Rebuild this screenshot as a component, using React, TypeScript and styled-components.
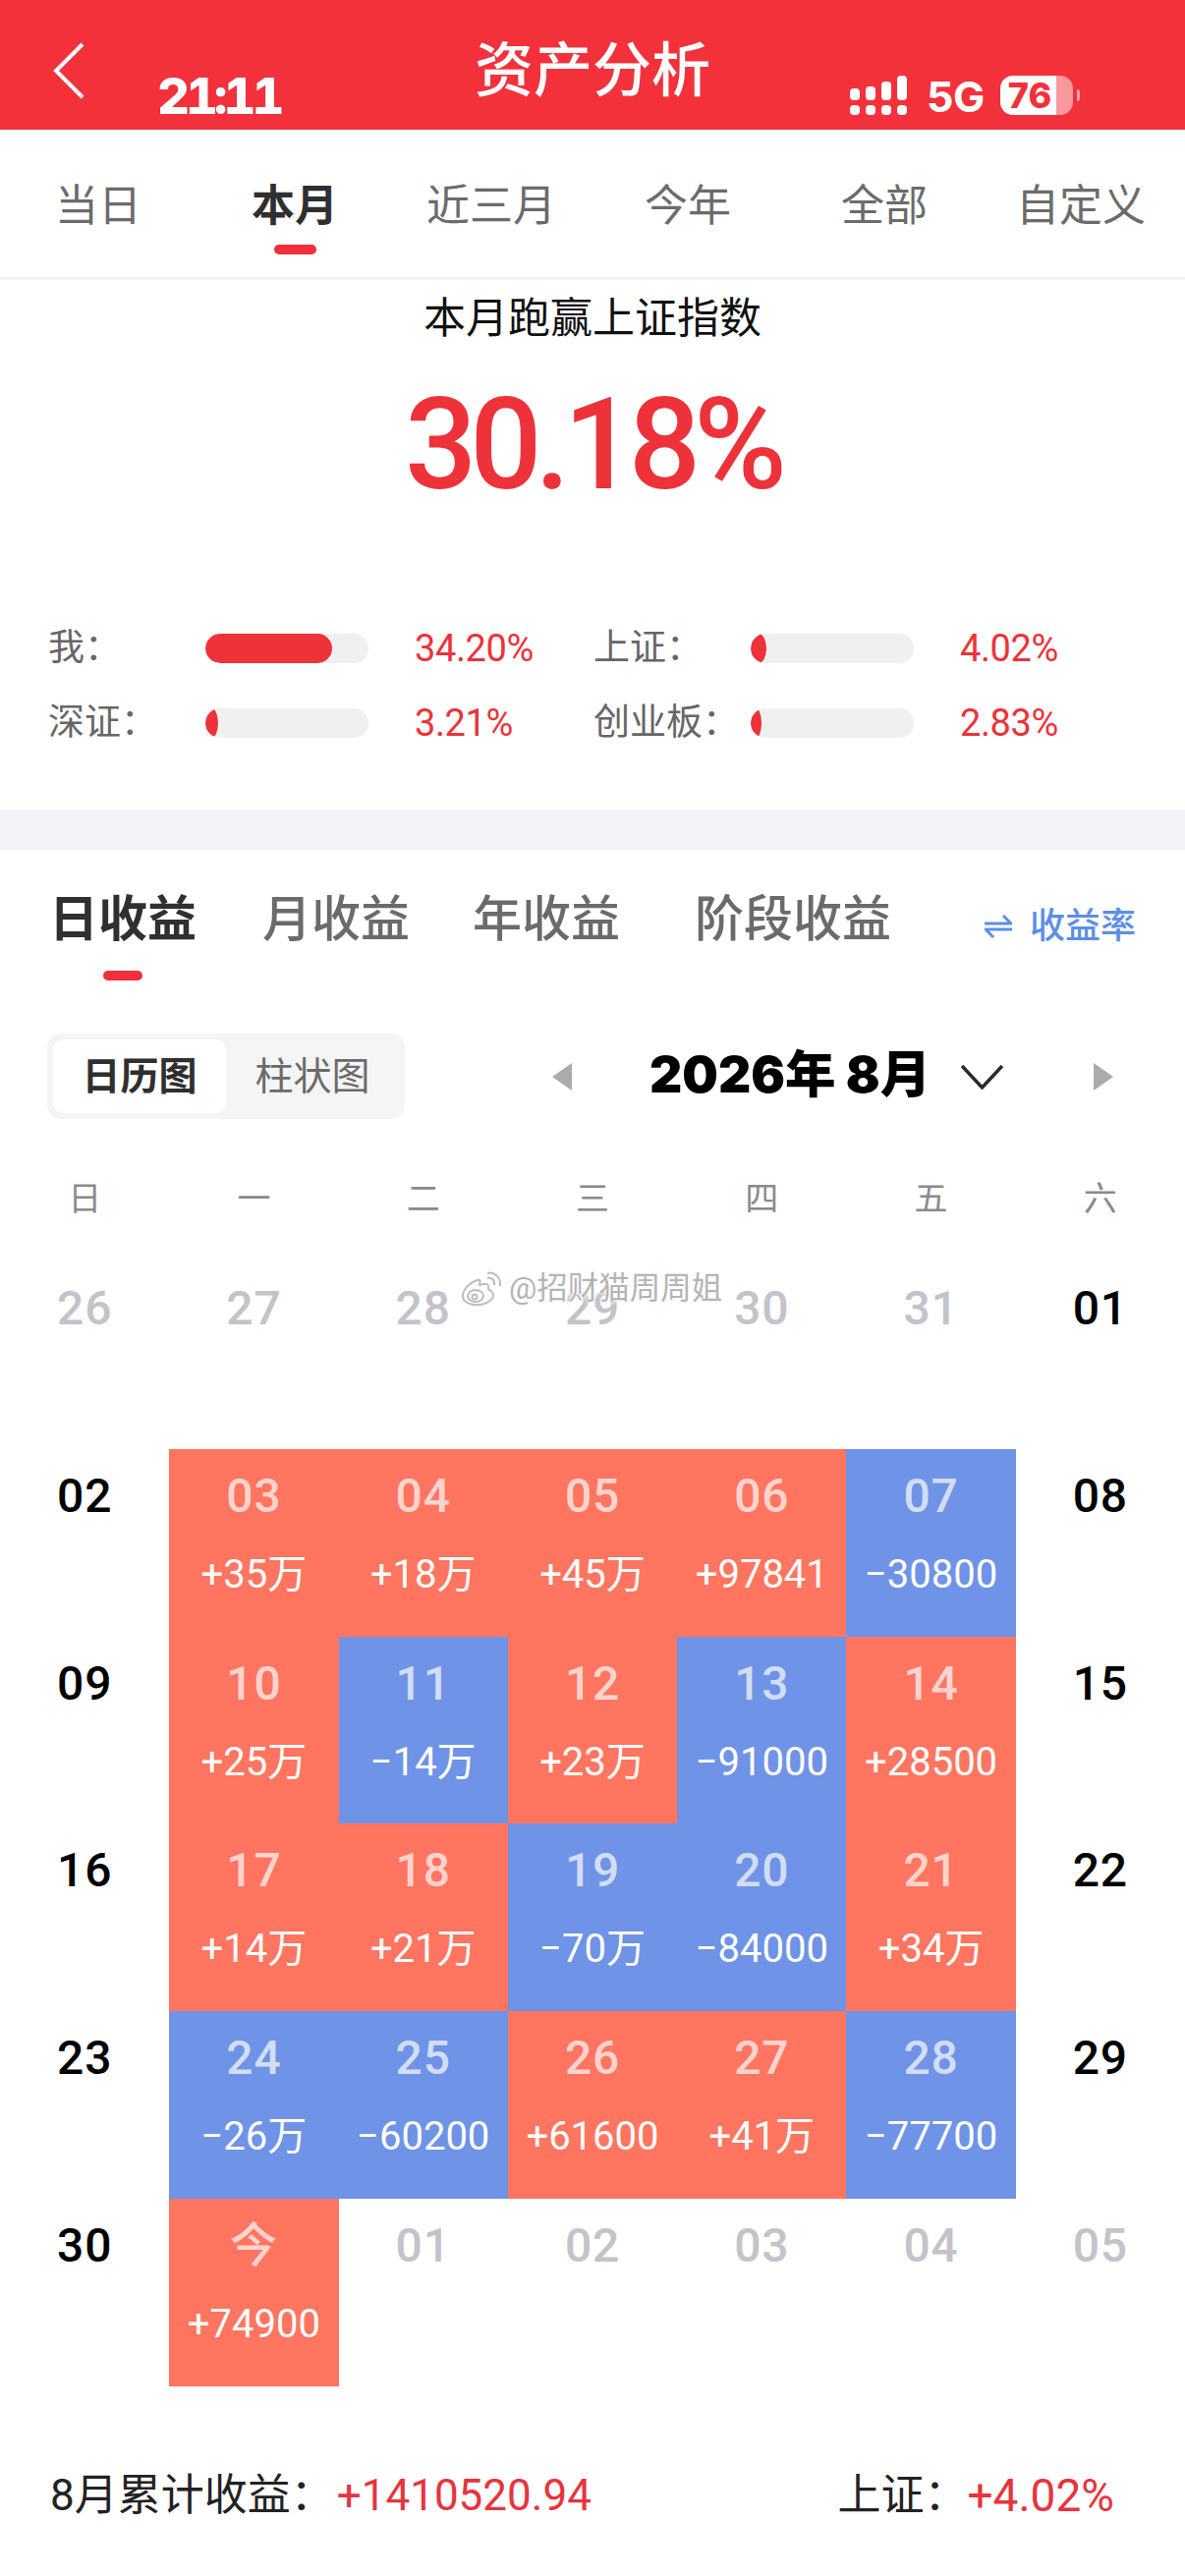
import React from 'react';
import styled, { createGlobalStyle } from 'styled-components';

const FONT = '"Roboto", "Noto Sans CJK SC", sans-serif';
const RED = '#f3313b';
const UP = '#ff7560';
const DOWN = '#6f93e6';

const GlobalStyle = createGlobalStyle`
  html, body {
    margin: 0;
    padding: 0;
    background: #fff;
  }
  body {
    font-family: ${FONT};
  }
  * {
    box-sizing: border-box;
  }
`;

const Page = styled.div`
  position: relative;
  width: 1206px;
  height: 2622px;
  overflow: hidden;
  background: #fff;
`;

const Header = styled.header`
  display: grid;
  grid-template-columns: 160px 323px 238px 144px auto;
  height: 132px;
  background: ${RED};
  color: #fff;
`;

const BackButton = styled.svg`
  margin: 43px 0 0 53px;
  width: 34px;
  height: 58px;
`;

const Clock = styled.div`
  margin-top: 70px;
  font: 800 51px/56px "Inter", sans-serif;
  font-variant-numeric: tabular-nums;
  letter-spacing: -4px;
`;

const Title = styled.h1`
  margin: 40px 0 0;
  font: 500 60px/66px ${FONT};
  white-space: nowrap;
`;

const StatusIcons = styled.div`
  grid-column: 5;
  display: flex;
  align-items: flex-start;
  margin-top: 77px;
`;

const Signal = styled.div`
  display: flex;
  gap: 6px;
  height: 40px;
`;

const SignalColumn = styled.div`
  display: flex;
  flex-direction: column;
  justify-content: flex-end;
  gap: 5px;
  width: 10px;
`;

const SignalBar = styled.span<{ $h: number }>`
  display: block;
  height: ${p => p.$h}px;
  border-radius: 4px;
  background: #fff;
`;

const Network = styled.div`
  margin: 1px 0 0 20px;
  width: 75px;
  font: 700 43px/40px "Inter", sans-serif;
  letter-spacing: -0.5px;
`;

const Battery = styled.div`
  display: flex;
  align-items: center;
  justify-content: center;
  width: 74px;
  height: 40px;
  padding-right: 14px;
  border-radius: 13px;
  background: linear-gradient(90deg, #fff 77%, rgba(255, 255, 255, 0.5) 77%);
  color: ${RED};
  font: 800 36px/40px "Inter", sans-serif;
`;

const BatteryNub = styled.span`
  width: 3px;
  height: 12px;
  margin: 14px 0 0 4px;
  border-radius: 0 3px 3px 0;
  background: rgba(255, 255, 255, 0.55);
`;

const PeriodTabs = styled.nav`
  display: grid;
  grid-template-columns: repeat(6, 200px);
  height: 153px;
  padding-top: 52px;
  border-bottom: 3px solid #f3f3f3;
`;

const TabColumn = styled.div`
  display: flex;
  flex-direction: column;
  align-items: center;
`;

const PeriodLabel = styled.span<{ $active?: boolean }>`
  font: ${p => (p.$active ? 700 : 400)} 44px/52px ${FONT};
  color: ${p => (p.$active ? '#2f2f2f' : '#6b6b6b')};
`;

const Underline = styled.span<{ $active?: boolean; $w: number; $gap: number }>`
  width: ${p => p.$w}px;
  height: 10px;
  margin-top: ${p => p.$gap}px;
  border-radius: 5px;
  background: ${p => (p.$active ? '#f02f3a' : 'transparent')};
`;

const Summary = styled.section`
  height: 539px;
  padding-top: 11px;
`;

const Caption = styled.div`
  font: 400 43px/56px ${FONT};
  color: #111;
  text-align: center;
`;

const BigNumber = styled.div`
  margin-top: 36px;
  font: 500 129px/130px ${FONT};
  letter-spacing: -7px;
  color: #ee3239;
  text-align: center;
`;

const Stats = styled.div`
  display: grid;
  grid-template-columns: 555px 1fr;
  row-gap: 30px;
  margin-top: 119px;
  padding-left: 49px;
`;

const Stat = styled.div`
  display: grid;
  grid-template-columns: 160px 166px auto;
  align-items: center;
  height: 46px;
`;

const StatLabel = styled.span`
  font: 400 37px/46px ${FONT};
  color: #666;
`;

const Track = styled.div`
  height: 30px;
  border-radius: 15px;
  background: #f0f0f0;
  overflow: hidden;
`;

const Fill = styled.div`
  height: 100%;
  background: #ee3239;
`;

const StatValue = styled.span`
  margin-left: 47px;
  font: 400 38px/46px ${FONT};
  letter-spacing: -0.4px;
  color: #ee3239;
`;

const Band = styled.div`
  height: 41px;
  background: #f2f3f7;
`;

const ProfitTabs = styled.div`
  display: flex;
  align-items: flex-start;
  padding: 41px 0 0 50px;
  height: 134px;
`;

const ProfitTab = styled(TabColumn)<{ $mr: number }>`
  margin-right: ${p => p.$mr}px;
`;

const ProfitLabel = styled.span<{ $active?: boolean }>`
  font: ${p => (p.$active ? 700 : 500)} 50px/60px ${FONT};
  color: ${p => (p.$active ? '#303030' : '#6b6b6b')};
  white-space: nowrap;
`;

const RateToggle = styled.div`
  display: flex;
  align-items: center;
  gap: 18px;
  margin: 14px 0 0 auto;
  padding-right: 50px;
  font: 500 36px/46px ${FONT};
  color: #5b8fe6;
`;

const Controls = styled.div`
  display: flex;
  align-items: center;
  margin-top: 53px;
  padding-left: 48px;
  height: 87px;
`;

const Segmented = styled.div`
  display: flex;
  width: 364px;
  height: 87px;
  padding: 6px;
  border-radius: 14px;
  background: #f5f5f5;
`;

const Segment = styled.div<{ $active?: boolean }>`
  width: 176px;
  border-radius: 10px;
  background: ${p => (p.$active ? '#fff' : 'transparent')};
  font: ${p => (p.$active ? 700 : 400)} 39px/77px ${FONT};
  color: ${p => (p.$active ? '#2f2f2f' : '#6b6b6b')};
  text-align: center;
`;

const Triangle = styled.span<{ $dir: 'left' | 'right'; $ml: number }>`
  width: 0;
  height: 0;
  margin-left: ${p => p.$ml}px;
  border-top: 14px solid transparent;
  border-bottom: 14px solid transparent;
  ${p => (p.$dir === 'left' ? 'border-right: 20px solid #ababab;' : 'border-left: 20px solid #ababab;')}
`;

const MonthTitle = styled.div`
  margin: -5px 0 0 79px;
  width: 279px;
  font: 900 51.5px/56px "Inter", "Noto Sans CJK SC", sans-serif;
  color: #000;
  white-space: nowrap;
`;

const Chevron = styled.svg`
  margin-left: 38px;
  width: 43px;
  height: 26px;
`;

const WeekRow = styled.div`
  display: grid;
  grid-template-columns: repeat(7, 1fr);
  margin-top: 61px;
  height: 40px;
`;

const WeekDay = styled.span`
  font: 400 34px/40px ${FONT};
  color: #8a8a8a;
  text-align: center;
`;

const CalendarGrid = styled.div`
  display: grid;
  grid-template-columns: repeat(7, 1fr);
  grid-auto-rows: 190.83px;
  margin-top: 44px;
`;

type Tone = 'up' | 'down' | 'plain' | 'muted';

const Cell = styled.div<{ $tone: Tone }>`
  display: flex;
  flex-direction: column;
  align-items: center;
  padding-top: 18px;
  background: ${p => (p.$tone === 'up' ? UP : p.$tone === 'down' ? DOWN : 'transparent')};
`;

const DayNumber = styled.span<{ $tone: Tone }>`
  font: 500 48px/60px ${FONT};
  letter-spacing: 0.8px;
  color: ${p =>
    p.$tone === 'plain'
      ? '#000'
      : p.$tone === 'muted'
        ? '#c3c3ca'
        : 'rgba(255, 255, 255, 0.7)'};
`;

const CellValue = styled.span`
  margin-top: 25px;
  font: 400 40px/50px ${FONT};
  color: #fff;
  white-space: nowrap;
`;

const Footer = styled.footer`
  display: flex;
  justify-content: space-between;
  margin-top: 83px;
  padding: 0 72px 0 51px;
  font: 400 44px/56px ${FONT};
  color: #222;
`;

const FooterGroup = styled.div`
  display: flex;
`;

const FooterValue = styled.span<{ $size: number; $ml: number }>`
  margin-left: ${p => p.$ml}px;
  font-size: ${p => p.$size}px;
  color: #e8333c;
`;

const Watermark = styled.div`
  position: absolute;
  left: 469px;
  top: 1292px;
  display: flex;
  align-items: center;
  gap: 7px;
  font: 400 31.5px/40px ${FONT};
  color: #b4b4b4;
  text-shadow: 0 0 3px #fff, 0 0 3px #fff, 0 0 5px #fff;
  white-space: nowrap;
`;

const periods = ['当日', '本月', '近三月', '今年', '全部', '自定义'];

const stats = [
  { label: '我：', width: 129, value: '34.20%' },
  { label: '上证：', width: 16, value: '4.02%' },
  { label: '深证：', width: 13, value: '3.21%' },
  { label: '创业板：', width: 11, value: '2.83%' },
];

const profitTabs = [
  { label: '日收益', mr: 67 },
  { label: '月收益', mr: 64 },
  { label: '年收益', mr: 76 },
  { label: '阶段收益', mr: 0 },
];

const week = ['日', '一', '二', '三', '四', '五', '六'];

type Day = { day: string; tone: Tone; value?: string };

const p = (day: string): Day => ({ day, tone: 'plain' });
const m = (day: string): Day => ({ day, tone: 'muted' });
const up = (day: string, value: string): Day => ({ day, tone: 'up', value });
const down = (day: string, value: string): Day => ({ day, tone: 'down', value });

const days: Day[] = [
  m('26'), m('27'), m('28'), m('29'), m('30'), m('31'), p('01'),
  p('02'), up('03', '+35万'), up('04', '+18万'), up('05', '+45万'), up('06', '+97841'), down('07', '−30800'), p('08'),
  p('09'), up('10', '+25万'), down('11', '−14万'), up('12', '+23万'), down('13', '−91000'), up('14', '+28500'), p('15'),
  p('16'), up('17', '+14万'), up('18', '+21万'), down('19', '−70万'), down('20', '−84000'), up('21', '+34万'), p('22'),
  p('23'), down('24', '−26万'), down('25', '−60200'), up('26', '+61600'), up('27', '+41万'), down('28', '−77700'), p('29'),
  p('30'), up('今', '+74900'), m('01'), m('02'), m('03'), m('04'), m('05'),
];

const signal = [12, 14, 19, 25];

export default function App() {
  return (
    <Page>
      <GlobalStyle />
      <Header>
        <BackButton viewBox="0 0 34 58" fill="none" stroke="#fff" strokeWidth="4">
          <path d="M31 2 L4 29 L31 56" />
        </BackButton>
        <Clock>21:11</Clock>
        <Title>资产分析</Title>
        <StatusIcons>
          <Signal>
            {signal.map((h, i) => (
              <SignalColumn key={i}>
                <SignalBar $h={h} />
                <SignalBar $h={10} />
              </SignalColumn>
            ))}
          </Signal>
          <Network>5G</Network>
          <Battery>76</Battery>
          <BatteryNub />
        </StatusIcons>
      </Header>

      <PeriodTabs>
        {periods.map((label, i) => (
          <TabColumn key={label}>
            <PeriodLabel $active={i === 1}>{label}</PeriodLabel>
            <Underline $active={i === 1} $w={43} $gap={13} />
          </TabColumn>
        ))}
      </PeriodTabs>

      <Summary>
        <Caption>本月跑赢上证指数</Caption>
        <BigNumber>30.18%</BigNumber>
        <Stats>
          {stats.map(s => (
            <Stat key={s.label}>
              <StatLabel>{s.label}</StatLabel>
              <Track>
                <Fill style={{ width: s.width, borderRadius: `${Math.min(s.width / 2, 15)}px / 15px` }} />
              </Track>
              <StatValue>{s.value}</StatValue>
            </Stat>
          ))}
        </Stats>
      </Summary>

      <Band />

      <ProfitTabs>
        {profitTabs.map((t, i) => (
          <ProfitTab key={t.label} $mr={t.mr}>
            <ProfitLabel $active={i === 0}>{t.label}</ProfitLabel>
            <Underline $active={i === 0} $w={40} $gap={22} />
          </ProfitTab>
        ))}
        <RateToggle>
          <svg width="28" height="24" viewBox="0 0 28 24" fill="none" stroke="#5b8fe6" strokeWidth="3">
            <path d="M0 9 H27 L19 1" />
            <path d="M28 15 H1 L9 23" />
          </svg>
          收益率
        </RateToggle>
      </ProfitTabs>

      <Controls>
        <Segmented>
          <Segment $active>日历图</Segment>
          <Segment>柱状图</Segment>
        </Segmented>
        <Triangle $dir="left" $ml={150} />
        <MonthTitle>2026年 8月</MonthTitle>
        <Chevron viewBox="0 0 43 26" fill="none" stroke="#2a2a2a" strokeWidth="3.5">
          <path d="M1 2 L21.5 24 L42 2" />
        </Chevron>
        <Triangle $dir="right" $ml={92} />
      </Controls>

      <WeekRow>
        {week.map(w => (
          <WeekDay key={w}>{w}</WeekDay>
        ))}
      </WeekRow>

      <CalendarGrid>
        {days.map((d, i) => (
          <Cell key={i} $tone={d.tone}>
            <DayNumber $tone={d.tone}>{d.day}</DayNumber>
            {d.value && <CellValue>{d.value}</CellValue>}
          </Cell>
        ))}
      </CalendarGrid>

      <Footer>
        <FooterGroup>
          8月累计收益：<FooterValue $size={44} $ml={3}>+1410520.94</FooterValue>
        </FooterGroup>
        <FooterGroup>
          上证：<FooterValue $size={46} $ml={0}>+4.02%</FooterValue>
        </FooterGroup>
      </Footer>

      <Watermark>
        <svg width="42" height="36" viewBox="0 0 42 36" fill="none" stroke="#bdbdbd" strokeWidth="2">
          <path d="M17 9 C8 12 1 20 2 26 C3 32 11 35 19 34 C28 33 34 28 33 23 C32 20 29 19 28 18 C29 14 27 12 23 13 L19 14 C20 10 20 8 17 9 Z" fill="#fff" />
          <ellipse cx="15" cy="25" rx="8" ry="6" />
          <circle cx="14" cy="26" r="2.5" />
          <path d="M27 7 C31 6 35 9 34 14" />
          <path d="M27 2 C34 0 41 6 40 15" />
        </svg>
        @招财猫周周姐
      </Watermark>
    </Page>
  );
}
